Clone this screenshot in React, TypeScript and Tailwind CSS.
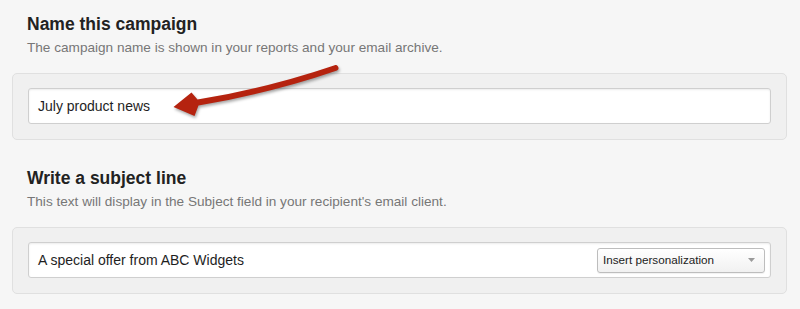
import React from "react";

const font = { fontFamily: '"Liberation Sans", Arial, sans-serif' };

function Section({
  title,
  hint,
  children,
  className = "",
}: {
  title: string;
  hint: string;
  children: React.ReactNode;
  className?: string;
}) {
  return (
    <div className={className}>
      <h2 className="pl-[27px] text-[17.5px] leading-[22px] font-bold text-[#222]">{title}</h2>
      <p className="mt-[4px] pl-[27px] text-[13.6px] leading-[18px] text-[#777]">{hint}</p>
      <div className="mt-[16px] ml-[12px] w-[775px] rounded-[5px] border border-[#e0e0e0] bg-[#f0f0f0] px-[15px] pt-[14px] pb-[15px]">
        {children}
      </div>
    </div>
  );
}

export default function App() {
  return (
    <div className="relative h-[309px] w-[800px] overflow-hidden bg-[#f6f6f6]" style={font}>
      <div className="pt-[13px]">
        <Section
          title="Name this campaign"
          hint="The campaign name is shown in your reports and your email archive."
        >
          <div className="flex h-[36px] items-center rounded-[3px] border border-[#cfcfcf] bg-white pl-[9px] text-[14px] text-[#1e1e1e] shadow-[inset_0_1px_2px_rgba(0,0,0,0.08)]">
            July product news
          </div>
        </Section>

        <Section
          className="mt-[27px]"
          title="Write a subject line"
          hint="This text will display in the Subject field in your recipient's email client."
        >
          <div className="flex h-[36px] items-center justify-between rounded-[3px] border border-[#cfcfcf] bg-white pl-[9px] pr-[5px] text-[14px] text-[#1e1e1e] shadow-[inset_0_1px_2px_rgba(0,0,0,0.08)]">
            <span>A special offer from ABC Widgets</span>
            <div className="flex h-[25px] w-[168px] items-center justify-between rounded-[3px] border border-[#bdbdbd] bg-gradient-to-b from-white to-[#f1f1f1] pl-[5px] pr-[9px] text-[11.7px] text-[#222] shadow-[0_1px_1px_rgba(0,0,0,0.06)]">
              <span>Insert personalization</span>
              <svg width="7" height="4" viewBox="0 0 7 4">
                <path d="M0 0 L7 0 L3.5 4 Z" fill="#9a9a9a" />
              </svg>
            </div>
          </div>
        </Section>
      </div>

      {/* annotation arrow */}
      <svg
        className="pointer-events-none absolute inset-0 drop-shadow-[1px_2px_1.5px_rgba(0,0,0,0.35)]"
        width="800"
        height="309"
        viewBox="0 0 800 309"
      >
        <path
          d="M334 65.5 Q268 88 197.5 99.5 L191.5 92.5 L173.5 107 L194.5 116 L198.5 105.5 Q272 93 337 70.5 A2.6 2.6 0 0 0 334 65.5 Z"
          fill="#b5230f"
        />
      </svg>
    </div>
  );
}
